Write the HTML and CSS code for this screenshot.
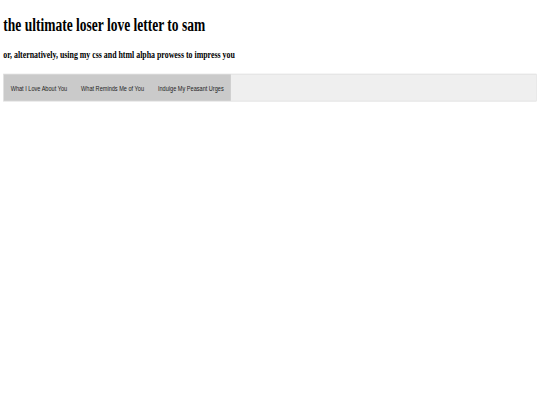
FILE: index.html
```html
<!DOCTYPE html>
<html lang="en">
<head>
<meta charset="utf-8">
<title>the ultimate loser love letter to sam</title>
<link rel="stylesheet" href="styles.css">
</head>
<body>
<div class="viewport">
  <div class="stage">
    <h1 class="title">the ultimate loser love letter to sam</h1>
    <h3 class="subtitle">or, alternatively, using my css and html alpha prowess to impress you</h3>
    <nav class="nav">
      <ul class="menu">
        <li class="menu-item"><a class="menu-link" href="#love">What I Love About You</a></li>
        <li class="menu-item"><a class="menu-link" href="#reminds">What Reminds Me of You</a></li>
        <li class="menu-item"><a class="menu-link" href="#urges">Indulge My Peasant Urges</a></li>
      </ul>
    </nav>
  </div>
</div>
</body>
</html>
```

FILE: styles.css
```css
html, body {
  margin: 0;
  padding: 0;
  background: #ffffff;
  overflow: hidden;
}

.viewport {
  width: 540px;
  height: 405px;
  overflow: hidden;
}

.stage {
  box-sizing: border-box;
  width: 1296px;
  height: 675px;
  padding: 21.8px 8px 0 8px;
  transform: scale(0.41667, 0.6);
  transform-origin: 0 0;
  background: #ffffff;
  font-family: "Liberation Serif", "Times New Roman", serif;
  color: #000000;
}

.title {
  margin: 0;
  font-size: 32.4px;
  font-weight: bold;
  line-height: normal;
}

.subtitle {
  margin: 21.44px 0 0 0;
  font-size: 18.9px;
  font-weight: bold;
  line-height: normal;
  opacity: 0.995;
}

.nav {
  margin-top: 21px;
  background: #efefef;
  border: 1px solid #dadada;
  display: flex;
}

.menu {
  list-style: none;
  margin: 0;
  padding: 0;
  display: flex;
  background: #cacaca;
}

.menu-item {
  display: flex;
}

.menu-link {
  display: block;
  padding: 14.5px 17px 14.5px 16.5px;
  font-family: "Liberation Sans", Arial, sans-serif;
  font-size: 13.4px;
  line-height: 15px;
  color: #222222;
  text-decoration: none;
}
```
